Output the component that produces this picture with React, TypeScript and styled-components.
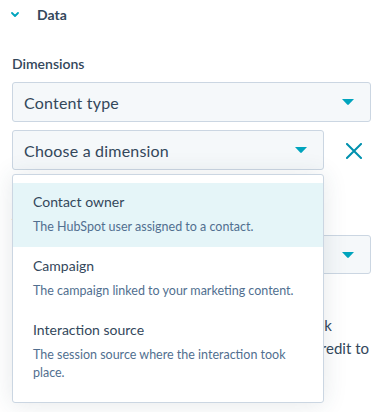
import React, { FC } from "react";
import styled, { createGlobalStyle } from "styled-components";

interface option {
  label: string;
  help: string;
}

const options: option[] = [
  { label: "Contact owner", help: "The HubSpot user assigned to a contact." },
  { label: "Campaign", help: "The campaign linked to your marketing content." },
  {
    label: "Interaction source",
    help: "The session source where the interaction took place.",
  },
];

const Caret: FC = () => (
  <svg width="12" height="6" viewBox="0 0 12 6">
    <path d="M0 0 H12 L6.8 5.6 Q6 6.3 5.2 5.6 Z" fill="#00a4bd" />
  </svg>
);

const App: FC = () => {
  return (
    <>
      <GlobalStyle />
      <StPanel>
        <StHeader>
          <svg width="8" height="5" viewBox="0 0 8 5">
            <path
              d="M1 1 L4 4 L7 1"
              fill="none"
              stroke="#00a4bd"
              strokeWidth="1.8"
              strokeLinecap="round"
              strokeLinejoin="round"
            />
          </svg>
          <span>Data</span>
        </StHeader>

        <StLabel>Dimensions</StLabel>

        <StSelect>
          <span>Content type</span>
          <Caret />
        </StSelect>

        <StRow>
          <StSelect $width="312px">
            <span>Choose a dimension</span>
            <Caret />
          </StSelect>
          <StRemove aria-label="Remove">
            <svg width="16" height="16" viewBox="0 0 16 16">
              <path
                d="M1 1 L15 15 M15 1 L1 15"
                stroke="#0091ae"
                strokeWidth="2"
                strokeLinecap="square"
              />
            </svg>
          </StRemove>

          <StMenu>
            {options.map((o, i) => (
              <StOption key={o.label} $active={i === 0}>
                <div className="Title">{o.label}</div>
                <div className="Help">{o.help}</div>
              </StOption>
            ))}
          </StMenu>
        </StRow>

        <StLabel $top="35px">Attribution model</StLabel>

        <StSelect $top="10px" $height="39px">
          <span>First interaction</span>
          <Caret />
        </StSelect>

        <StNote>
          <StNoteLine $width="320px">
            Gives all credit to the first interaction that took
          </StNoteLine>
          <StNoteLine $width="357px">
            place, so the first touch receives the full credit to
          </StNoteLine>
        </StNote>
      </StPanel>
    </>
  );
};

export default App;

const GlobalStyle = createGlobalStyle`
  body {
    margin: 0;
    background: #ffffff;
    font-family: Lato, "Open Sans", sans-serif;
    color: #33475b;
  }
`;

const StPanel = styled.div`
  width: 384px;
  height: 412px;
  padding: 0 13px 0 12px;
  box-sizing: border-box;
  overflow: hidden;
`;

const StHeader = styled.div`
  display: flex;
  align-items: center;
  gap: 18px;
  height: 28px;
  margin-left: -1px;
  font-size: 14px;
  font-weight: 700;
  color: #33475b;
`;

const StLabel = styled.div<{ $top?: string }>`
  margin-top: ${(p) => p.$top || "26px"};
  font-size: 14px;
  line-height: 20px;
  font-weight: 600;
  color: #33475b;
`;

const StSelect = styled.div<{ $width?: string; $top?: string; $height?: string }>`
  display: flex;
  align-items: center;
  justify-content: space-between;
  box-sizing: border-box;
  width: ${(p) => p.$width || "100%"};
  height: ${(p) => p.$height || "40px"};
  margin-top: ${(p) => p.$top || "8px"};
  padding: 0 16px 0 11px;
  background-color: #f5f8fa;
  border: 1px solid #cbd6e2;
  border-radius: 3px;
  font-size: 16px;
  letter-spacing: 0.2px;
  color: #33475b;
`;

const StRow = styled.div`
  position: relative;
  display: flex;
  align-items: flex-end;
  gap: 22px;
`;

const StRemove = styled.div`
  display: flex;
  width: 16px;
  height: 16px;
  margin-bottom: 11px;
`;

const StMenu = styled.div`
  position: absolute;
  z-index: 2;
  top: 52px;
  left: 0;
  box-sizing: border-box;
  width: 312px;
  padding: 8px 0 9px;
  background-color: #ffffff;
  border: 1px solid #cbd6e2;
  border-radius: 3px;
  box-shadow: 0 1px 24px rgba(45, 62, 80, 0.12);
`;

const StOption = styled.div<{ $active: boolean }>`
  padding: 8px 20px 11px 20px;
  background-color: ${(p) => (p.$active ? "#e5f5f8" : "transparent")};

  .Title {
    font-size: 14px;
    line-height: 21px;
    color: #33475b;
  }

  .Help {
    margin-top: 6px;
    font-size: 12.5px;
    line-height: 18px;
    color: #516f90;
  }
`;

const StNote = styled.div`
  margin-top: 40px;
  font-size: 15px;
  line-height: 23px;
  color: #33475b;
`;

const StNoteLine = styled.div<{ $width: string }>`
  width: ${(p) => p.$width};
  overflow: hidden;
  white-space: nowrap;
  text-align: right;
`;
